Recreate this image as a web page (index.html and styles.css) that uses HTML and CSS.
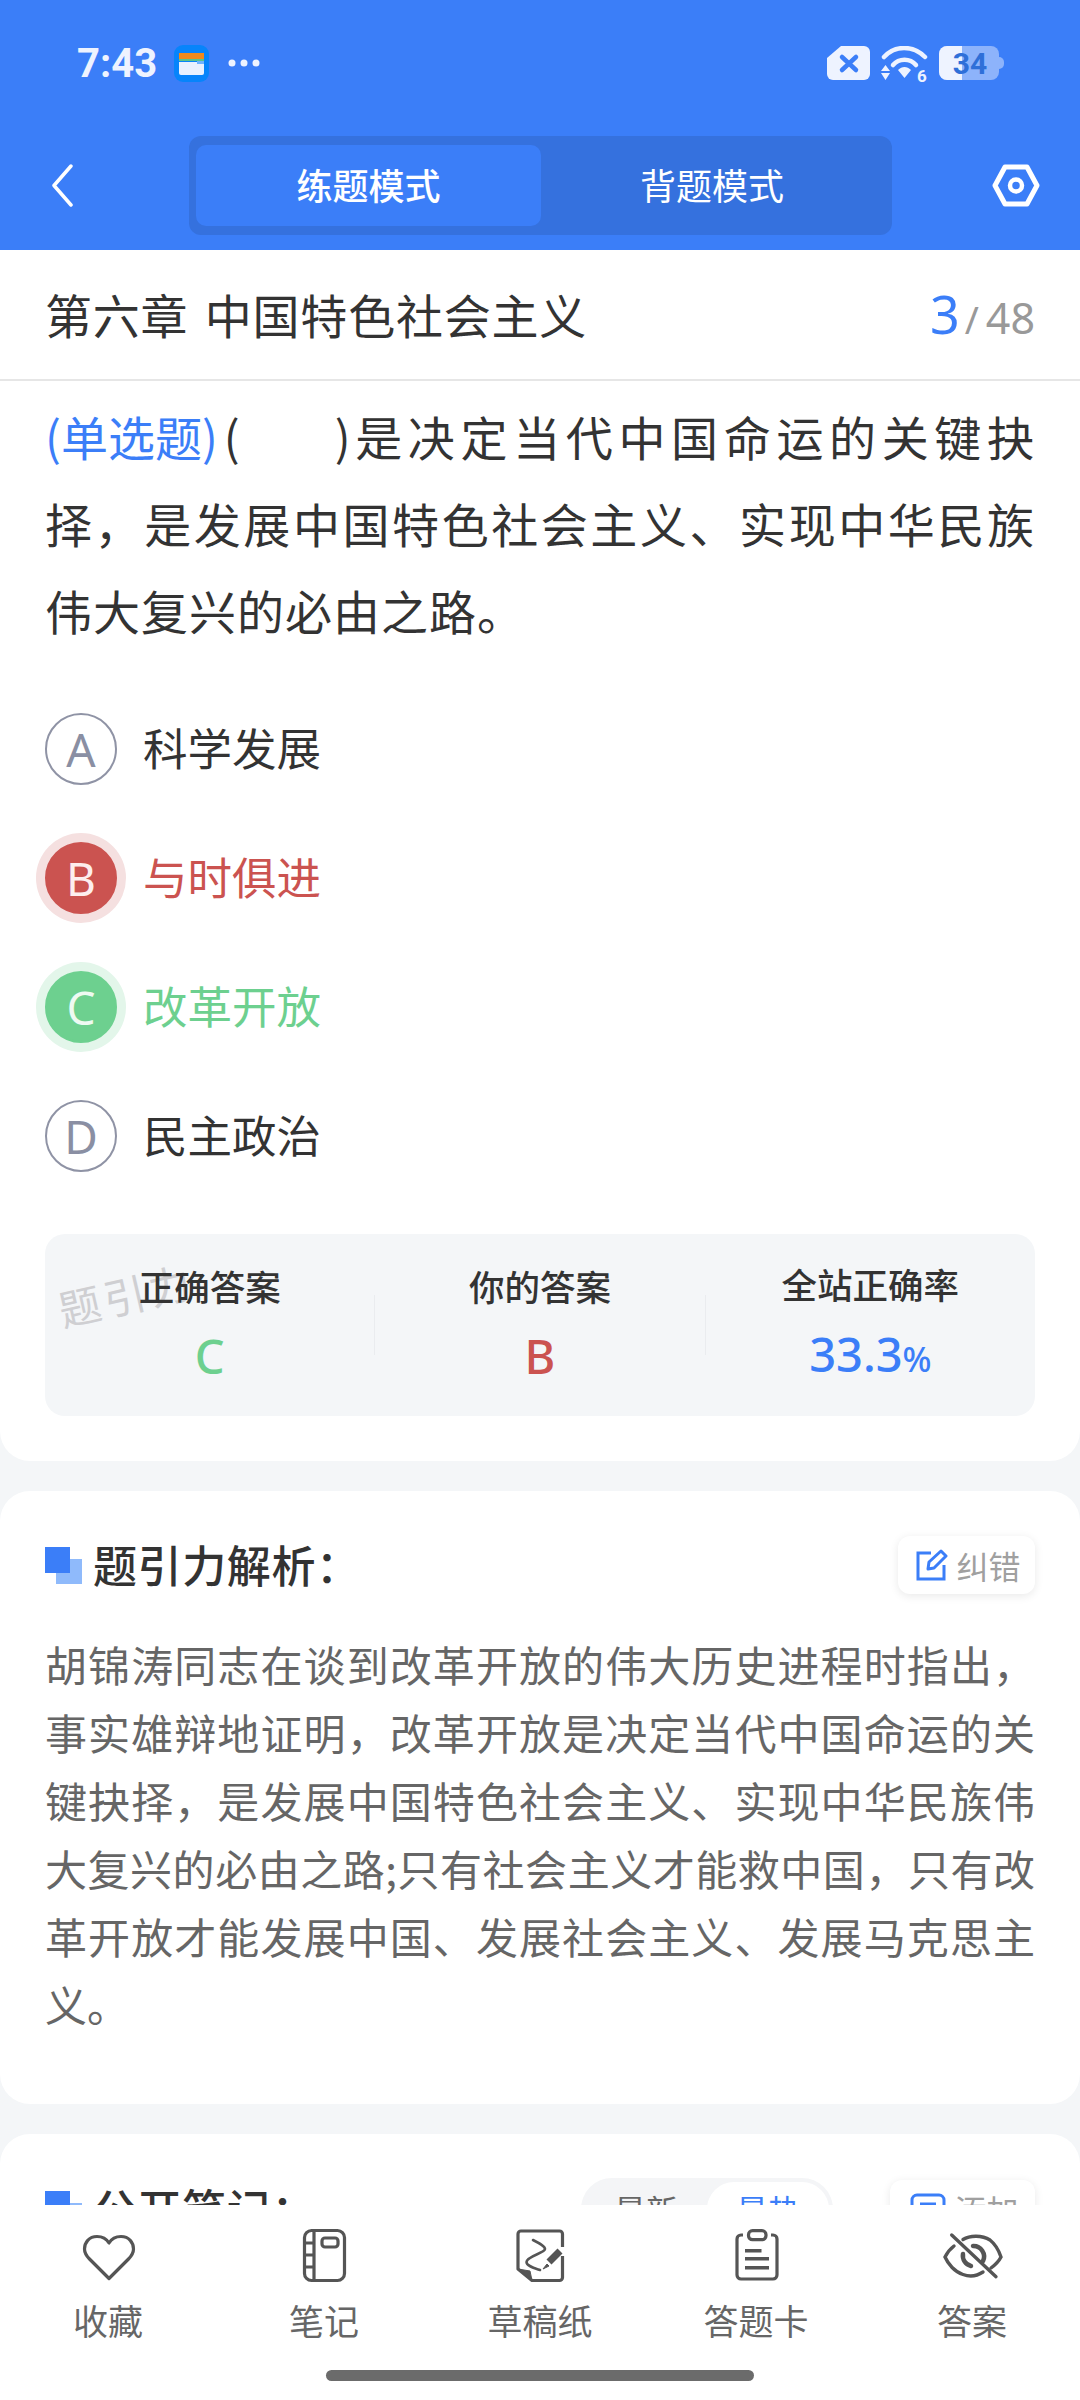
FILE: index.html
```html
<!DOCTYPE html>
<html lang="zh-CN">
<head>
    <meta charset="UTF-8">
    <meta name="viewport" content="width=device-width, initial-scale=1.0">
    <title>练题模式</title>
    <link rel="stylesheet" href="styles.css">
</head>
<body>
    <header class="top">
        <div class="status">
            <span class="time">7:43</span>
            <svg class="wallet" width="35" height="37" viewBox="0 0 35 37">
                <rect width="35" height="37" rx="9" fill="#0784fb"/>
                <rect x="5" y="8" width="25" height="6" fill="#f08a1d"/>
                <rect x="5" y="14" width="25" height="2" fill="#5cc18a"/>
                <path d="M5 17 H30 V28 a2 2 0 0 1 -2 2 H7 a2 2 0 0 1 -2 -2 Z" fill="#e9f1ff"/>
                <rect x="23" y="16" width="7" height="3" fill="#6fb3ff"/>
            </svg>
            <svg class="dots" width="32" height="10" viewBox="0 0 32 10">
                <circle cx="4" cy="5" r="3.5" fill="#eef3ff"/>
                <circle cx="16" cy="5" r="3.5" fill="#eef3ff"/>
                <circle cx="28" cy="5" r="3.5" fill="#eef3ff"/>
            </svg>
            <div class="status-right">
                <svg width="43" height="35" viewBox="0 0 43 35">
                    <path d="M14 0 H37 a6 6 0 0 1 6 6 V28 a6 6 0 0 1 -6 6 H6 a6 6 0 0 1 -6 -6 V12 Z" fill="#eef3ff"/>
                    <path d="M15 11 L29 24 M29 11 L15 24" stroke="#3b7ef8" stroke-width="4.5" stroke-linecap="round"/>
                </svg>
                <svg width="47" height="37" viewBox="0 0 47 37">
                    <path d="M3 11 C14 -1 32 -1 44 11" fill="none" stroke="#eef3ff" stroke-width="4.5" stroke-linecap="round"/>
                    <path d="M12 19 C18 12 29 12 35 19" fill="none" stroke="#eef3ff" stroke-width="4.5" stroke-linecap="round"/>
                    <path d="M17 24 C21 20 26 20 30 24 L23.5 32 Z" fill="#eef3ff"/>
                    <path d="M4.500 19 L9 25 H0 Z M0 27 H9 L4.500 34 Z" fill="#eef3ff"/>
                    <text class="wifi-num" x="36" y="36">6</text>
                </svg>
                <svg width="65" height="35" viewBox="0 0 65 35">
                    <rect x="0" y="0" width="60" height="34" rx="8" fill="#8db3fb"/>
                    <path d="M58 11 h2 a5 5 0 0 1 5 5 v2 a5 5 0 0 1 -5 5 h-2 Z" fill="#8db3fb"/>
                    <path d="M8 0 H23 V34 H8 a8 8 0 0 1 -8 -8 V8 a8 8 0 0 1 8 -8 Z" fill="#eef3ff"/>
                    <text class="batt-num" x="31" y="28" text-anchor="middle">34</text>
                </svg>
            </div>
        </div>
        <nav class="nav">
            <svg class="back" width="24" height="44" viewBox="0 0 24 44">
                <path d="M21 2 L4 21.500 L21 41" fill="none" stroke="#fff" stroke-width="3.500" stroke-linecap="round" stroke-linejoin="round"/>
            </svg>
            <div class="tabs">
                <div class="tab active">练题模式</div>
                <div class="tab">背题模式</div>
            </div>
            <svg class="gear" width="48" height="43" viewBox="0 0 48 43">
                <path d="M3 21.500 L13 3 H35 L45 21.500 L35 40 H13 Z" fill="none" stroke="#fff" stroke-width="5" stroke-linejoin="round"/>
                <circle cx="24" cy="21.500" r="6" fill="none" stroke="#fff" stroke-width="4.500"/>
            </svg>
        </nav>
    </header>

    <main class="scroll">
        <section class="card card-question">
            <div class="chapter">
                <div class="chapter-name">第六章 中国特色社会主义</div>
                <div class="count"><span class="count-now">3</span><span class="count-sep">/</span><span class="count-all">48</span></div>
            </div>
            <p class="question"><span class="q-type">(单选题)</span><span class="q-paren">(<span class="blank"></span>)</span>是决定当代中国命运的关键抉择，是发展中国特色社会主义、实现中华民族伟大复兴的必由之路。</p>
            <div class="options">
                <div class="option"><span class="letter">A</span><span class="option-text">科学发展</span></div>
                <div class="option wrong"><span class="letter">B</span><span class="option-text">与时俱进</span></div>
                <div class="option right"><span class="letter">C</span><span class="option-text">改革开放</span></div>
                <div class="option"><span class="letter">D</span><span class="option-text">民主政治</span></div>
            </div>
            <div class="stats">
                <span class="watermark">题引力</span>
                <div class="stat">
                    <div class="stat-label">正确答案</div>
                    <div class="stat-value green">C</div>
                </div>
                <div class="stat-line"></div>
                <div class="stat">
                    <div class="stat-label">你的答案</div>
                    <div class="stat-value red">B</div>
                </div>
                <div class="stat-line"></div>
                <div class="stat">
                    <div class="stat-label">全站正确率</div>
                    <div class="stat-value blue">33.3<small>%</small></div>
                </div>
            </div>
        </section>

        <section class="card card-text">
            <div class="card-head">
                <svg class="mark" width="37" height="37" viewBox="0 0 37 37">
                    <rect x="11" y="12" width="26" height="25" fill="#8fbafb"/>
                    <rect x="0" y="0" width="25" height="26" fill="#3b7ef8"/>
                </svg>
                <h2>题引力解析：</h2>
                <div class="mini-btn">
                    <svg width="32" height="32" viewBox="0 0 32 32">
                        <path d="M15 4 H2 V30 H28 V16" fill="none" stroke="#3b7ef8" stroke-width="3"/>
                        <path d="M12 20 L13 13 L25 2 L30 7 L18 19 Z" fill="none" stroke="#3b7ef8" stroke-width="3" stroke-linejoin="round"/>
                    </svg>
                    纠错
                </div>
            </div>
            <p class="analysis">胡锦涛同志在谈到改革开放的伟大历史进程时指出，事实雄辩地证明，改革开放是决定当代中国命运的关键抉择，是发展中国特色社会主义、实现中华民族伟大复兴的必由之路;只有社会主义才能救中国，只有改革开放才能发展中国、发展社会主义、发展马克思主义。</p>
        </section>

        <section class="card card-notes">
            <div class="card-head">
                <svg class="mark" width="37" height="37" viewBox="0 0 37 37">
                    <rect x="11" y="12" width="26" height="25" fill="#8fbafb"/>
                    <rect x="0" y="0" width="25" height="26" fill="#3b7ef8"/>
                </svg>
                <h2>公开笔记：</h2>
                <div class="seg">
                    <span class="seg-item">最新</span>
                    <span class="seg-item on">最热</span>
                </div>
                <div class="mini-btn add">
                    <svg width="36" height="32" viewBox="0 0 36 32">
                        <rect x="2" y="2" width="32" height="28" rx="5" fill="none" stroke="#3b7ef8" stroke-width="3"/>
                        <path d="M10 11 H26 M10 19 H26" stroke="#3b7ef8" stroke-width="3"/>
                    </svg>
                    添加
                </div>
            </div>
        </section>
    </main>

    <footer class="bar">
        <div class="bar-items">
            <div class="bar-item">
                <svg width="64" height="56" viewBox="0 0 64 56" fill="none" stroke="#555" stroke-width="3.200">
                    <path d="M33 15 C30 10 25 8.500 21 8.500 C13 8.500 8.500 14.500 8.500 21 C8.500 25.500 11 28.500 13.500 31 L33 50.500 L52.500 31 C55 28.500 57.500 25.500 57.500 21 C57.500 14.500 53 8.500 45 8.500 C41 8.500 36 10 33 15 Z" stroke-linejoin="round"/>
                </svg>
                <span>收藏</span>
            </div>
            <div class="bar-item">
                <svg width="64" height="56" viewBox="0 0 64 56" fill="none" stroke="#555" stroke-width="3.200">
                    <rect x="12.500" y="2.500" width="40" height="50" rx="7"/>
                    <path d="M22 2.500 V52.500 M12.500 15 H22 M12.500 27 H22 M12.500 39 H22"/>
                    <rect x="30" y="10" width="16" height="9" rx="3"/>
                </svg>
                <span>笔记</span>
            </div>
            <div class="bar-item">
                <svg width="64" height="56" viewBox="0 0 64 56" fill="none" stroke="#555" stroke-width="3.200">
                    <path d="M54.500 19 V6 a3 3 0 0 0 -3 -3 H13 a3 3 0 0 0 -3 3 V41 L24 52.500 H51.500 a3 3 0 0 0 3 -3 V28" stroke-linejoin="round"/>
                    <path d="M10 41 L22 43 L24 52.500 Z" fill="#555" stroke-width="1"/>
                    <path d="M25 12 C31 15 37 18 37 21 C37 25 19 28 18.500 34 C18.500 38 26 40 32 42" stroke-width="2.600" stroke-linecap="round"/>
                    <path d="M52 23 L41 34" stroke-width="7"/>
                    <path d="M39 36 L35 41 L41 38 Z" fill="#555" stroke-width="1"/>
                </svg>
                <span>草稿纸</span>
            </div>
            <div class="bar-item">
                <svg width="64" height="56" viewBox="0 0 64 56" fill="none" stroke="#555" stroke-width="3.200">
                    <path d="M19 7 H17 a4 4 0 0 0 -4 4 V47 a4 4 0 0 0 4 4 H49 a4 4 0 0 0 4 -4 V11 a4 4 0 0 0 -4 -4 H47"/>
                    <rect x="24.500" y="2.700" width="17.500" height="9" rx="4"/>
                    <path d="M21 22.700 H37.500 M21 30.700 H45 M21 39.700 H45" stroke-width="3.500"/>
                </svg>
                <span>答题卡</span>
            </div>
            <div class="bar-item">
                <svg width="64" height="56" viewBox="0 0 64 56" fill="none" stroke="#555" stroke-width="3.400" stroke-linecap="round">
                    <path d="M11.700 7 L56 48.700"/>
                    <path d="M23 11.500 C30 7 42 7 50 12 C55 16 59 23 61 29 C59 33 55 37 51 40"/>
                    <path d="M14 18 C10 21 7 25 5 29 C8 36 15 44 23 46.500 C30 49 37 48 43 44"/>
                    <path d="M33 18 A10.500 10.500 0 0 1 43 33" stroke-width="4.500"/>
                    <path d="M23 26 A10.500 10.500 0 0 0 31 38" stroke-width="4.500"/>
                </svg>
                <span>答案</span>
            </div>
        </div>
        <div class="home"></div>
    </footer>
</body>
</html>
```

FILE: styles.css
```css
* {
    box-sizing: border-box;
}

body {
    width: 1080px;
    height: 2400px;
    margin: 0;
    display: flex;
    flex-direction: column;
    overflow: hidden;
    background: #f4f6f8;
    color: #333;
    font-family: "Noto Sans CJK SC", "Noto Sans", sans-serif;
}

/* header */
.top {
    height: 250px;
    background: #3b7ef8;
    flex: none;
}

.status {
    height: 136px;
    padding: 45px 76px 0 77px;
    display: flex;
    align-items: flex-start;
}

.time {
    height: 37px;
    line-height: 37px;
    font-family: Roboto, sans-serif;
    font-size: 40px;
    font-weight: 700;
    color: #eef3ff;
}

.wallet {
    margin-left: 17px;
}

.dots {
    margin: 13px 0 0 19px;
}

.status-right {
    margin-left: auto;
    display: flex;
    gap: 11px;
    margin-top: 1px;
}

.wifi-num {
    font-family: Roboto, sans-serif;
    font-size: 17px;
    font-weight: 700;
    fill: #eef3ff;
}

.batt-num {
    font-family: Roboto, sans-serif;
    font-size: 30px;
    font-weight: 700;
    fill: #2f6fd8;
}

.nav {
    display: flex;
    align-items: center;
    padding-left: 50px;
}

.back {
    flex: none;
}

.tabs {
    width: 703px;
    height: 99px;
    margin-left: 115px;
    padding: 9px 7px;
    display: flex;
    background: #3571de;
    border-radius: 12px;
}

.tab {
    flex: 1;
    display: flex;
    align-items: center;
    justify-content: center;
    padding: 0 2px 4px 0;
    border-radius: 10px;
    color: #fff;
    font-size: 36px;
}

.tab.active {
    flex: none;
    width: 345px;
    padding-right: 0;
    background: #3b7ef8;
    font-weight: 500;
}

.gear {
    margin-left: 100px;
}

/* main */
.scroll {
    flex: 1;
    overflow: hidden;
}

.card {
    background: #fff;
    border-radius: 30px;
    padding: 0 45px;
    margin-bottom: 30px;
}

.card-question {
    border-radius: 0 0 30px 30px;
    padding-bottom: 45px;
}

.chapter {
    height: 131px;
    margin: 0 -45px;
    padding: 0 45px 2px;
    display: flex;
    align-items: center;
    justify-content: space-between;
    border-bottom: 2px solid #e6e6e6;
}

.chapter-name {
    font-size: 47px;
    letter-spacing: 0.8px;
    word-spacing: 5px;
}

.count {
    display: flex;
    align-items: baseline;
    font-family: "Noto Sans", sans-serif;
    color: #999;
}

.count-now {
    font-size: 52px;
    color: #3b7ef8;
}

.count-sep {
    font-size: 38px;
    margin: 0 7px 0 5px;
}

.count-all {
    font-size: 43px;
}

.question {
    margin: 11px 0 0;
    font-size: 47px;
    line-height: 87px;
    letter-spacing: 1px;
    text-align: justify;
}

.q-type {
    display: inline-block;
    letter-spacing: 0;
    color: #3b7ef8;
}

.q-paren {
    display: inline-block;
    margin-left: 6px;
    letter-spacing: 0;
}

.blank {
    display: inline-block;
    width: 95px;
}

.options {
    margin-top: 31px;
}

.option {
    height: 129px;
    display: flex;
    align-items: center;
    font-size: 44.5px;
}

.option-text {
    margin-bottom: 5px;
}

.letter {
    width: 72px;
    height: 72px;
    margin-right: 26px;
    display: flex;
    align-items: center;
    justify-content: center;
    border: 2px solid #8f93a5;
    border-radius: 50%;
    font-family: "Noto Sans", sans-serif;
    font-size: 46px;
    font-weight: 400;
    color: #8a8fa3;
}

.wrong {
    color: #cb5350;
}

.wrong .letter {
    background: #cb5350;
    border-color: #cb5350;
    box-shadow: 0 0 0 9px #f5e0e0;
    color: #fdeeee;
}

.right {
    color: #6dd08f;
}

.right .letter {
    background: #6dd08f;
    border-color: #6dd08f;
    box-shadow: 0 0 0 9px #e3f6ea;
    color: #eefaf2;
}

.stats {
    position: relative;
    height: 182px;
    margin-top: 34px;
    display: grid;
    grid-template-columns: 1fr 1px 1fr 1px 1fr;
    align-items: center;
    background: #f4f6f8;
    border-radius: 20px;
}

.watermark {
    position: absolute;
    left: 12px;
    top: 29px;
    font-size: 42px;
    letter-spacing: 4px;
    color: #cfcfd2;
    transform: rotate(-13deg);
}

.stat {
    text-align: center;
    position: relative;
}

.stat-label {
    font-size: 35.5px;
    font-weight: 500;
    line-height: 44px;
    margin-bottom: 18px;
}

.stat-value {
    font-family: "Noto Sans", sans-serif;
    font-size: 47px;
    font-weight: 500;
    line-height: 60px;
}

.stat-value small {
    font-size: 34px;
}

.stat-line {
    height: 60px;
    background: #eaecef;
}

.green {
    color: #6dd08f;
}

.red {
    color: #cb5350;
}

.blue {
    color: #3b7ef8;
}

.card-text {
    padding-top: 45px;
    padding-bottom: 66px;
}

.card-notes {
    padding-top: 46px;
    padding-bottom: 40px;
}

.card-head {
    display: flex;
    align-items: center;
    height: 58px;
}

.mark {
    flex: none;
    margin-right: 11px;
}

.card-head h2 {
    margin: 0;
    padding-bottom: 3px;
    font-size: 44px;
    font-weight: 500;
    letter-spacing: 0.6px;
    color: #333;
}

.mini-btn {
    width: 137px;
    height: 58px;
    margin-left: auto;
    padding-left: 4px;
    display: flex;
    align-items: center;
    justify-content: center;
    gap: 8px;
    background: #fff;
    border-radius: 12px;
    box-shadow: 0 2px 10px rgba(0, 0, 0, 0.09);
    font-size: 32px;
    color: #a0a0a0;
}

.mini-btn.add {
    width: 145px;
    margin-left: 57px;
}

.analysis {
    margin: 36px 0 0;
    font-size: 42px;
    line-height: 68px;
    text-align: justify;
    color: #666;
}

.seg {
    width: 252px;
    height: 62px;
    margin-left: auto;
    padding: 4px;
    display: flex;
    background: #f4f5f7;
    border-radius: 31px;
    font-size: 32px;
    color: #666;
}

.seg-item {
    flex: 1;
    display: flex;
    align-items: center;
    justify-content: center;
    border-radius: 27px;
}

.seg-item.on {
    background: #fff;
    color: #3b7ef8;
}

/* bottom bar */
.bar {
    position: relative;
    height: 195px;
    flex: none;
    background: #fff;
    padding-top: 23px;
}

.bar-items {
    display: flex;
}

.bar-item {
    width: 216px;
    display: flex;
    flex-direction: column;
    align-items: center;
    gap: 14px;
    font-size: 35px;
    line-height: 44px;
    color: #666;
}

.bar-item svg {
    display: block;
}

.home {
    width: 428px;
    height: 11px;
    margin: 28px auto 0;
    background: #6b6b6b;
    border-radius: 6px;
}
```
